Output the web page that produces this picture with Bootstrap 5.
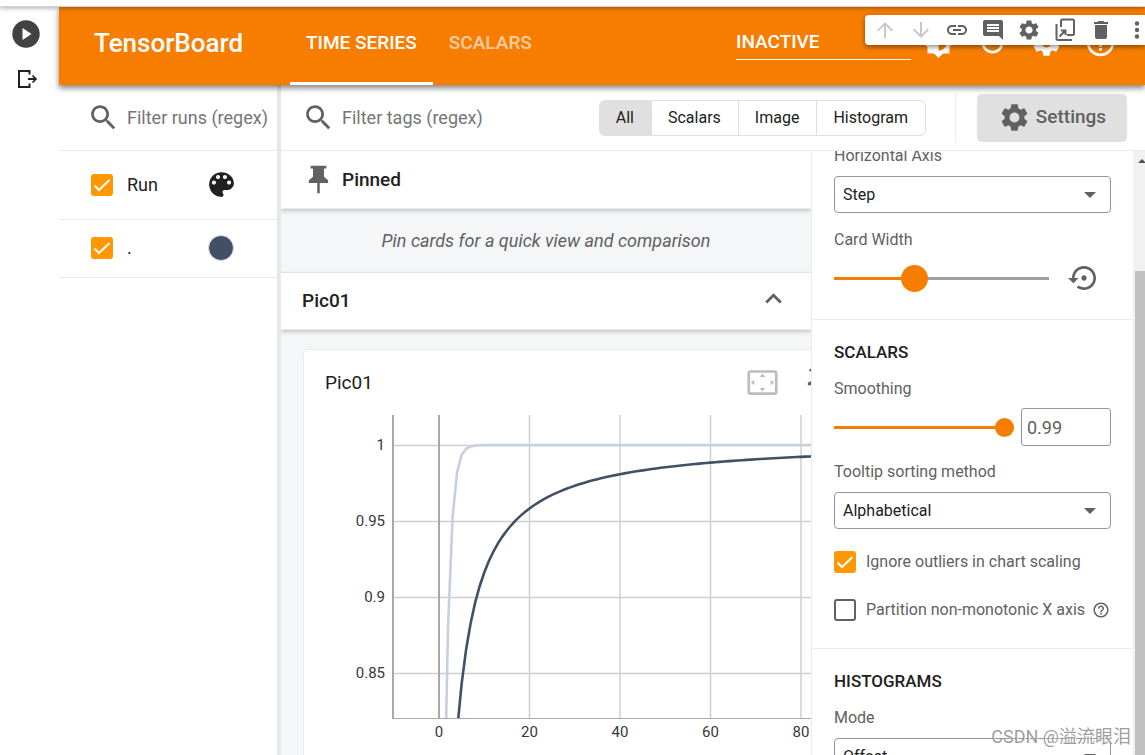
<!DOCTYPE html>
<html lang="en">
<head>
<meta charset="utf-8">
<meta name="viewport" content="width=device-width, initial-scale=1">
<title>TensorBoard</title>
<link href="https://cdn.jsdelivr.net/npm/bootstrap@5.3.0/dist/css/bootstrap.min.css" rel="stylesheet">
<style>
  :root { --tb-orange: #f77d00; --tb-line: #ebebeb; --tb-muted: #616161; --tb-ink: #212121; }
  body { font-family: Roboto, "Noto Sans CJK SC", sans-serif; font-size: 16px; line-height: 20px; color: var(--tb-ink); }
  svg { fill: currentColor; flex: none; display: block; }
  button { font-family: inherit; }
  .ic { width: 33px; height: 33px; }
  .ic-sm { width: 24px; height: 24px; }
  .ic-line { fill: none; stroke: currentColor; stroke-width: 2; }
  .plain { background: none; border: 0; padding: 0; color: inherit; }
  .gray { color: var(--tb-muted); }
  .ink { color: var(--tb-ink); }
  .pale { color: #bdbdbd; }
  .fit-h { min-height: 0; }
  .fit-w { min-width: 0; }

  .cell-edge { height: 7px; border-bottom: 1px solid #d4d4d4; box-shadow: 0 1px 5px rgba(0,0,0,.35); z-index: 5; }
  .rail { width: 59px; padding: 13px 8px 0 0; gap: 19px; color: #424242; }
  .cell-tools { top: 15px; right: 0; width: 280px; height: 30px; padding-left: 8px; gap: 12px; border-radius: 4px 0 0 4px; z-index: 6; color: var(--tb-muted); box-shadow: 0 2px 5px rgba(0,0,0,.45); }
  .cell-tools .off { color: #c8c8c8; }

  .topbar { height: 78px; background: var(--tb-orange); box-shadow: 0 3px 6px rgba(0,0,0,.5); z-index: 3; padding-left: 35px; }
  .brand { font-size: 26px; line-height: 32px; font-weight: 500; width: 196px; margin-bottom: 7px; }
  .tabs a { font-size: 19px; font-weight: 500; color: rgba(255,255,255,.65); text-decoration: none; padding: 0 16px 4px; border-bottom: 3px solid transparent; }
  .tabs a.active { color: #fff; border-color: #fff; }
  .reload { width: 175px; height: 36px; margin-right: 11px; margin-bottom: 8px; appearance: none; background: none; color: #fff; border: 0; border-bottom: 1px solid #fff; border-radius: 0; font-size: 19px; font-weight: 500; padding: 0; }
  .top-icons { gap: 21px; padding-right: 28px; padding-bottom: 7px; }

  .runs { width: 218px; }
  .resizer { width: 4px; background: #e8e8e8; }
  .filter { height: 66px; border-bottom: 1px solid var(--tb-line); color: var(--tb-muted); gap: 7px; }
  .filter input { font-size: 18px; border: 0; padding: 0; outline: 0; min-width: 0; background: none; }
  .filter input::placeholder { color: #757575; opacity: 1; }
  .runs .filter { padding-left: 28px; }
  .runs-table { font-size: 18px; width: 100%; border-collapse: collapse; }
  .runs-table th, .runs-table td { height: 58px; padding: 0; font-weight: 400; vertical-align: middle; border-bottom: 1px solid var(--tb-line); }
  .runs-table thead th { height: 68px; }
  .runs-table .col-pick { width: 68px; padding-left: 32px; }
  .col-color { width: 72px; }
  .swatch { width: 26px; height: 26px; border-radius: 50%; background: #425066; border: 1px solid #dde0e6; margin-left: 3px; display: block; padding: 0; }

  .tick { appearance: none; width: 22px; height: 22px; border: 2px solid var(--tb-muted); border-radius: 3px; margin: 0; flex: none; display: block; background-color: #fff; }
  .tick:checked { border-color: #ff9800; background: #ff9800 url("data:image/svg+xml,%3Csvg xmlns='http://www.w3.org/2000/svg' viewBox='0 0 18 18'%3E%3Cpath d='M1.5 9.5l4.5 4.5L16.5 4' fill='none' stroke='%23fff' stroke-width='2'/%3E%3C/svg%3E") center/18px no-repeat; }

  .board .filter { padding: 0 18px 0 21px; }
  .kinds .btn { --bs-btn-border-color: #e0e0e0; --bs-btn-color: #212121; --bs-btn-active-bg: #e0e0e0; --bs-btn-active-border-color: #e0e0e0; --bs-btn-active-color: #212121; font-size: 16px; line-height: 20px; padding: 7px 17px 7px 16px; }
  .vline { width: 1px; height: 48px; background: var(--tb-line); margin: 0 14px 0 22px; }
  .btn-set { background: #e0e0e0; color: var(--tb-muted); font-size: 19px; font-weight: 500; height: 48px; width: 150px; border-radius: 5px; padding: 0; gap: 5px; flex: none; }

  .cards { background: #f5f6f7; }
  .group-head { height: 58px; background: #fff; font-size: 19px; font-weight: 500; box-shadow: 0 2px 4px rgba(0,0,0,.2); padding: 0 21px; border-bottom: 1px solid var(--tb-line); z-index: 1; gap: 7px; flex: none; }
  .no-pins { height: 63px; font-size: 18px; font-style: italic; color: var(--tb-muted); }
  .plot-card { margin: 19px 0 0 22px; width: 618px; flex: none; background: #fff; border: 1px solid var(--tb-line); border-radius: 5px 5px 0 0; }
  .plot-head { height: 65px; padding: 0 31px 0 21px; font-size: 19px; }
  .plot-head .acts { gap: 22px; }
  .chart text { font-size: 15px; fill: #383838; }

  .panel { width: 322px; border-left: 1px solid var(--tb-line); color: var(--tb-muted); }
  .panel section { padding: 22px 22px 0; border-bottom: 1px solid var(--tb-line); flex: none; }
  .panel section.scrolled { height: 174px; margin-top: -5px; padding-top: 0; }
  .panel label, .panel h2 { display: block; line-height: 20px; margin: 0; }
  .panel h2 { font-size: 17px; font-weight: 500; color: var(--tb-ink); margin-bottom: 17px; }
  .picker { height: 37px; width: 277px; border: 1px solid #8e98a3; border-radius: 4px; padding: 0 8px; color: var(--tb-ink); appearance: none; font-size: 16px; margin: 10px 0 17px; background: #fff url("data:image/svg+xml,%3Csvg xmlns='http://www.w3.org/2000/svg' viewBox='0 0 12 6'%3E%3Cpath d='M0 0h12L6 6z' fill='%23616161'/%3E%3C/svg%3E") right 14px center/12px 6px no-repeat; display: block; }
  .width-row { margin-top: 12px; padding-right: 11px; }
  .smooth-row { margin: 9px 0 16px; gap: 7px; }
  .number { width: 90px; height: 38px; border: 1px solid #8e98a3; border-radius: 3px; color: var(--tb-muted); font-size: 18px; padding: 0 5px; appearance: textfield; }
  .slide { appearance: none; height: 28px; background: linear-gradient(90deg, var(--tb-orange) var(--at), #9e9e9e var(--at)) center/100% 3px no-repeat; margin: 0; --at: 37%; width: 215px; }
  .slide::-webkit-slider-thumb { appearance: none; width: 27px; height: 27px; border-radius: 50%; background: var(--tb-orange); }
  .slide.end { --at: 100%; width: 180px; }
  .slide.end::-webkit-slider-thumb { width: 19px; height: 19px; }
  .opts { gap: 26px; padding: 5px 0 27px; }
  .opt { height: 22px; white-space: nowrap; }
  .opt label { padding: 0 7px 0 10px; flex: none; }

  .track { width: 12px; background: #f1f1f1; padding: 120px 0 0 2px; position: relative; }
  .track::before { content: ""; position: absolute; top: 8px; left: 5px; border: 4px solid transparent; border-top: 0; border-bottom-color: #505050; }
  .thumb { background: #c1c1c1; }
  .watermark { right: 14px; bottom: 6px; font-size: 18px; line-height: 24px; color: rgba(140,140,140,.85); text-shadow: 1px 1px 0 rgba(255,255,255,.9); z-index: 7; }
</style>
</head>
<body class="vh-100 overflow-hidden d-flex flex-column position-relative">

<svg class="d-none">
  <symbol id="gear" viewBox="0 0 24 24"><path d="M19.14 12.94c.04-.3.06-.61.06-.94 0-.32-.02-.64-.07-.94l2.03-1.58c.18-.14.23-.41.12-.61l-1.92-3.32c-.12-.22-.37-.29-.59-.22l-2.39.96c-.5-.38-1.03-.7-1.62-.94l-.36-2.54c-.04-.24-.24-.41-.48-.41h-3.84c-.24 0-.43.17-.47.41l-.36 2.54c-.59.24-1.13.57-1.62.94l-2.39-.96c-.22-.08-.47 0-.59.22L2.74 8.87c-.12.21-.08.47.12.61l2.03 1.58c-.05.3-.09.63-.09.94s.02.64.07.94l-2.03 1.58c-.18.14-.23.41-.12.61l1.92 3.32c.12.22.37.29.59.22l2.39-.96c.5.38 1.03.7 1.62.94l.36 2.54c.05.24.24.41.48.41h3.84c.24 0 .44-.17.47-.41l.36-2.54c.59-.24 1.13-.56 1.62-.94l2.39.96c.22.08.47 0 .59-.22l1.92-3.32c.12-.22.07-.47-.12-.61l-2.01-1.58zM12 15.6c-1.98 0-3.6-1.62-3.6-3.6s1.62-3.6 3.6-3.6 3.6 1.62 3.6 3.6-1.62 3.6-3.6 3.6z"/></symbol>
  <symbol id="help" viewBox="0 0 24 24"><path d="M11 18h2v-2h-2v2zm1-16C6.48 2 2 6.48 2 12s4.48 10 10 10 10-4.48 10-10S17.52 2 12 2zm0 18c-4.41 0-8-3.59-8-8s3.59-8 8-8 8 3.59 8 8-3.59 8-8 8zm0-14c-2.21 0-4 1.79-4 4h2c0-1.1.9-2 2-2s2 .9 2 2c0 2-3 1.75-3 5h2c0-2.25 3-2.5 3-5 0-2.21-1.79-4-4-4z"/></symbol>
  <symbol id="search" viewBox="0 0 24 24"><path d="M15.5 14h-.79l-.28-.27C15.41 12.59 16 11.11 16 9.5 16 5.91 13.09 3 9.5 3S3 5.91 3 9.5 5.91 16 9.5 16c1.61 0 3.09-.59 4.23-1.57l.27.28v.79l5 4.99L20.49 19l-4.99-5zm-6 0C7.01 14 5 11.99 5 9.5S7.01 5 9.5 5 14 7.01 14 9.5 11.99 14 9.5 14z"/></symbol>
</svg>

<div class="cell-edge bg-white flex-shrink-0 position-relative"></div>

<div class="cell-tools bg-white position-absolute d-flex align-items-center overflow-hidden">
  <button class="plain off" aria-label="Move up"><svg class="ic-sm" viewBox="0 0 24 24"><path d="M4 12l1.41 1.41L11 7.83V20h2V7.83l5.58 5.59L20 12l-8-8-8 8z"/></svg></button>
  <button class="plain off" aria-label="Move down"><svg class="ic-sm" viewBox="0 0 24 24"><path d="M20 12l-1.41-1.41L13 16.17V4h-2v12.17l-5.58-5.59L4 12l8 8 8-8z"/></svg></button>
  <button class="plain" aria-label="Copy link"><svg class="ic-sm" viewBox="0 0 24 24"><path d="M3.9 12c0-1.71 1.39-3.1 3.1-3.1h4V7H7c-2.76 0-5 2.24-5 5s2.24 5 5 5h4v-1.9H7c-1.71 0-3.1-1.39-3.1-3.1zM8 13h8v-2H8v2zm9-6h-4v1.9h4c1.71 0 3.1 1.39 3.1 3.1s-1.39 3.1-3.1 3.1h-4V17h4c2.76 0 5-2.24 5-5s-2.24-5-5-5z"/></svg></button>
  <button class="plain" aria-label="Comment"><svg class="ic-sm" viewBox="0 0 24 24"><path d="M22 4c0-1.1-.9-2-2-2H4c-1.1 0-2 .9-2 2v12c0 1.1.9 2 2 2h14l4 4V4zM18 14H6v-2h12v2zm0-3H6V9h12v2zm0-3H6V6h12v2z"/></svg></button>
  <button class="plain" aria-label="Cell settings"><svg class="ic-sm"><use href="#gear"/></svg></button>
  <button class="plain" aria-label="Mirror cell"><svg class="ic-sm ic-line" viewBox="0 0 24 24"><path d="M3.500 6v14.500q0 1.500 1.500 1.500H19M8 9V3q0-1.500 1.500-1.500h10Q21 1.500 21 3v12.500q0 1.500-1.500 1.500H14M6.500 18.500L12 13M8 12.500h4.500V17"/></svg></button>
  <button class="plain" aria-label="Delete"><svg class="ic-sm" viewBox="0 0 24 24"><path d="M6 19c0 1.1.9 2 2 2h8c1.1 0 2-.9 2-2V7H6v12zM19 4h-3.500l-1-1h-5l-1 1H5v2h14V4z"/></svg></button>
  <button class="plain" aria-label="More"><svg class="ic-sm" viewBox="0 0 24 24"><circle cx="12" cy="5.500" r="2.200"/><circle cx="12" cy="12" r="2.200"/><circle cx="12" cy="18.500" r="2.200"/></svg></button>
</div>

<div class="d-flex flex-fill fit-h">
  <aside class="rail flex-shrink-0 d-flex flex-column align-items-center">
    <button class="plain" aria-label="Run cell"><svg width="28" height="28" viewBox="0 0 28 28"><circle cx="14" cy="14" r="13.700"/><path d="M10.500 8v12l9-6z" fill="#fff"/></svg></button>
    <button class="plain ink" aria-label="Output"><svg class="ic-sm ic-line" viewBox="0 0 24 24"><path d="M15.500 7.500V4H5v16h10.500v-3.500M14 12h8" /><path d="M18.500 8.500L22 12l-3.500 3.500" stroke-width="1.700"/></svg></button>
  </aside>

  <div class="d-flex flex-column flex-fill fit-w">
    <header class="topbar flex-shrink-0 d-flex text-white position-relative">
      <div class="brand align-self-center">TensorBoard</div>
      <nav class="tabs d-flex me-auto">
        <a href="#" class="active d-flex align-items-center">TIME SERIES</a>
        <a href="#" class="d-flex align-items-center">SCALARS</a>
      </nav>
      <select class="reload align-self-center" aria-label="Plugin"><option>INACTIVE</option></select>
      <div class="top-icons d-flex align-items-center">
        <button class="plain" aria-label="Theme"><svg class="ic" viewBox="0 0 24 24"><path d="M20 15.31L23.31 12 20 8.69V4h-4.69L12 .69 8.69 4H4v4.69L.69 12 4 15.31V20h4.69L12 23.31 15.31 20H20v-4.69zM12 18V6c3.31 0 6 2.69 6 6s-2.69 6-6 6z"/></svg></button>
        <button class="plain" aria-label="Reload"><svg class="ic" viewBox="0 0 24 24"><path d="M17.65 6.35C16.2 4.9 14.21 4 12 4c-4.42 0-7.99 3.58-7.99 8s3.57 8 7.99 8c3.73 0 6.84-2.55 7.73-6h-2.08c-.82 2.33-3.04 4-5.65 4-3.31 0-6-2.69-6-6s2.69-6 6-6c1.66 0 3.14.69 4.22 1.78L13 11h7V4l-2.35 2.35z"/></svg></button>
        <button class="plain" aria-label="Preferences"><svg class="ic"><use href="#gear"/></svg></button>
        <button class="plain" aria-label="Help"><svg class="ic"><use href="#help"/></svg></button>
      </div>
    </header>

    <div class="d-flex flex-fill fit-h">
      <div class="runs flex-shrink-0">
        <div class="filter d-flex align-items-center">
          <svg class="ic"><use href="#search"/></svg>
          <input class="flex-fill" type="text" placeholder="Filter runs (regex)" aria-label="Filter runs">
        </div>
        <table class="runs-table">
          <thead><tr>
            <th class="col-pick"><input class="tick" type="checkbox" checked aria-label="All runs"></th>
            <th>Run</th>
            <th class="col-color"><svg class="ic" viewBox="0 0 24 24"><path d="M12 3c-4.97 0-9 4.03-9 9s4.03 9 9 9c.83 0 1.5-.67 1.5-1.5 0-.39-.15-.74-.39-1.01-.23-.26-.38-.61-.38-.99 0-.83.67-1.5 1.5-1.5H16c2.76 0 5-2.24 5-5 0-4.42-4.03-8-9-8zm-5.5 9c-.83 0-1.5-.67-1.5-1.5S5.67 9 6.5 9 8 9.67 8 10.5 7.33 12 6.5 12zm3-4C8.67 8 8 7.33 8 6.5S8.67 5 9.5 5s1.5.67 1.5 1.5S10.33 8 9.5 8zm5 0c-.83 0-1.5-.67-1.5-1.5S13.67 5 14.5 5s1.5.67 1.5 1.5S15.33 8 14.5 8zm3 4c-.83 0-1.5-.67-1.5-1.5S16.67 9 17.5 9s1.5.67 1.5 1.5-.67 1.5-1.5 1.5z"/></svg></th>
          </tr></thead>
          <tbody><tr>
            <td class="col-pick"><input class="tick" type="checkbox" checked aria-label="Run ."></td>
            <td>.</td>
            <td class="col-color"><button class="swatch" aria-label="Run color"></button></td>
          </tr></tbody>
        </table>
      </div>
      <div class="resizer flex-shrink-0"></div>

      <main class="board d-flex flex-column flex-fill fit-w">
        <div class="filter d-flex align-items-center flex-shrink-0">
          <svg class="ic"><use href="#search"/></svg>
          <input class="flex-fill" type="text" placeholder="Filter tags (regex)" aria-label="Filter tags">
          <div class="kinds btn-group flex-shrink-0">
            <button class="btn active">All</button><button class="btn">Scalars</button><button class="btn">Image</button><button class="btn">Histogram</button>
          </div>
          <div class="vline flex-shrink-0"></div>
          <button class="btn btn-set d-flex align-items-center justify-content-center"><svg class="ic"><use href="#gear"/></svg>Settings</button>
        </div>

        <div class="d-flex flex-fill fit-h">
          <div class="cards d-flex flex-column flex-fill overflow-hidden fit-w">
            <div class="group-head position-relative d-flex align-items-center">
              <svg class="ic gray" viewBox="0 0 24 24"><path d="M6.300 2h11.400v2H16v6l3 2.500v2h-6.100V22h-1.800v-7.500H5v-2L8 10V4H6.300z"/></svg>
              <span>Pinned</span>
            </div>
            <div class="no-pins flex-shrink-0 d-flex align-items-center justify-content-center">Pin cards for a quick view and comparison</div>
            <div class="group-head border-top position-relative d-flex align-items-center justify-content-between">
              <span>Pic01</span>
              <button class="plain gray" aria-label="Collapse"><svg class="ic" viewBox="0 0 24 24"><path d="M12 6l-6 6 1.410 1.410L12 8.830l4.590 4.580L18 12z"/></svg></button>
            </div>
            <div class="plot-card">
              <div class="plot-head d-flex align-items-center justify-content-between">
                <span>Pic01</span>
                <div class="acts d-flex">
                  <button class="plain pale" aria-label="Fit domain"><svg class="ic" viewBox="0 0 24 24"><path d="M12.01 5.5L10 8h4l-1.99-2.5zM18 10v4l2.5-1.99L18 10zM6 10l-2.5 2.01L6 14v-4zm8 6h-4l2.01 2.5L14 16zm7-13H3c-1.1 0-2 .9-2 2v14c0 1.1.9 2 2 2h18c1.1 0 2-.9 2-2V5c0-1.1-.9-2-2-2zm0 16.01H3V4.99h18v14.02z"/></svg></button>
                  <button class="plain gray" aria-label="Pin card"><svg class="ic" viewBox="0 0 24 24"><path d="M14 4v5c0 1.12.37 2.16 1 3H9c.65-.86 1-1.9 1-3V4h4m3-2H7c-.55 0-1 .45-1 1s.45 1 1 1h1v5c0 1.66-1.34 3-3 3v2h5.970v7l1 1 1-1v-7H19v-2c-1.66 0-3-1.34-3-3V4h1c.55 0 1-.45 1-1s-.45-1-1-1z"/></svg></button>
                  <button class="plain gray" aria-label="More"><svg class="ic" viewBox="0 0 24 24"><circle cx="12" cy="6" r="2"/><circle cx="12" cy="12" r="2"/><circle cx="12" cy="18" r="2"/></svg></button>
                </div>
              </div>
              <svg class="chart" id="chart" width="616" height="345" viewBox="0 0 616 345" role="img" aria-label="Pic01 scalar chart"></svg>
            </div>
          </div>

          <div class="panel flex-shrink-0 d-flex flex-column overflow-hidden">
            <section class="scrolled">
              <label for="axis">Horizontal Axis</label>
              <select id="axis" class="picker"><option>Step</option></select>
              <label for="cardw">Card Width</label>
              <div class="width-row d-flex align-items-center justify-content-between">
                <input id="cardw" class="slide" type="range" min="0" max="1000" value="354">
                <button class="plain" aria-label="Reset card width"><svg width="32" height="32" viewBox="0 0 24 24"><path d="M14 12c0-1.1-.9-2-2-2s-2 .9-2 2 .9 2 2 2 2-.9 2-2zm-2-9c-4.97 0-9 4.03-9 9H0l4 4 4-4H5c0-3.87 3.13-7 7-7s7 3.13 7 7-3.13 7-7 7c-1.51 0-2.91-.49-4.06-1.3l-1.42 1.44C8.04 20.3 9.94 21 12 21c4.97 0 9-4.03 9-9s-4.03-9-9-9z"/></svg></button>
              </div>
            </section>
            <section>
              <h2>SCALARS</h2>
              <label for="smooth">Smoothing</label>
              <div class="smooth-row d-flex align-items-center">
                <input id="smooth" class="slide end" type="range" min="0" max="999" value="999">
                <input class="number" type="number" value="0.99" step="0.01" aria-label="Smoothing value">
              </div>
              <label for="sort">Tooltip sorting method</label>
              <select id="sort" class="picker"><option>Alphabetical</option></select>
              <div class="opts d-flex flex-column">
                <div class="opt d-flex align-items-center"><input id="outl" class="tick" type="checkbox" checked><label for="outl">Ignore outliers in chart scaling</label></div>
                <div class="opt d-flex align-items-center"><input id="part" class="tick" type="checkbox"><label for="part">Partition non-monotonic X axis</label><svg width="18" height="18"><use href="#help"/></svg></div>
              </div>
            </section>
            <section>
              <h2>HISTOGRAMS</h2>
              <label for="mode">Mode</label>
              <select id="mode" class="picker"><option>Offset</option></select>
            </section>
          </div>
          <div class="track flex-shrink-0 d-flex"><div class="thumb flex-fill"></div></div>
        </div>
      </main>
    </div>
  </div>
</div>
<div class="watermark position-absolute">CSDN @溢流眼泪</div>

<script src="https://cdn.jsdelivr.net/npm/bootstrap@5.3.0/dist/js/bootstrap.bundle.min.js"></script>
<script>
  // Sigmoid series, raw and smoothed with a 0.99 debiased moving average
  const sx = n => 135 + n * 4.525, sy = v => 30 + (1 - v) * 1518;
  const bottom = 303, left = 89, right = 590;
  const line = (x1, y1, x2, y2, c, w) => `<line x1="${x1}" y1="${y1}" x2="${x2}" y2="${y2}" stroke="${c}" stroke-width="${w}"/>`;
  let s = `<clipPath id="clip"><rect x="${left}" y="0" width="${right - left}" height="${bottom}"/></clipPath>`;
  for (const v of [1, .95, .9, .85]) {
    const y = Math.round(sy(v)) + .5;
    s += line(left, y, right, y, '#cfcfcf', 1.5) + `<text x="81" y="${y + 4}" text-anchor="end">${v}</text>`;
  }
  for (const n of [0, 20, 40, 60, 80]) {
    s += line(sx(n), 0, sx(n), bottom, n ? '#cfcfcf' : '#a8a8a8', n ? 1.5 : 2) + `<text x="${sx(n)}" y="322" text-anchor="middle">${n}</text>`;
  }
  s += line(left, 0, left, bottom + 1, '#a8a8a8', 2) + line(left, bottom + .5, right, bottom + .5, '#a8a8a8', 1);
  const raw = [], smooth = [];
  let ema = 0;
  for (let n = 0; n < 100; n++) {
    const v = 1 / (1 + Math.exp(-n));
    ema = ema * .99 + v * .01;
    raw.push(sx(n) + ',' + sy(v));
    smooth.push(sx(n) + ',' + sy(ema / (1 - Math.pow(.99, n + 1))));
  }
  s += `<g clip-path="url(#clip)" fill="none" stroke-width="2.6"><polyline points="${raw.join(' ')}" stroke="#c8d0e0"/><polyline points="${smooth.join(' ')}" stroke="#425066"/></g>`;
  document.getElementById('chart').innerHTML = s;
</script>
</body>
</html>
